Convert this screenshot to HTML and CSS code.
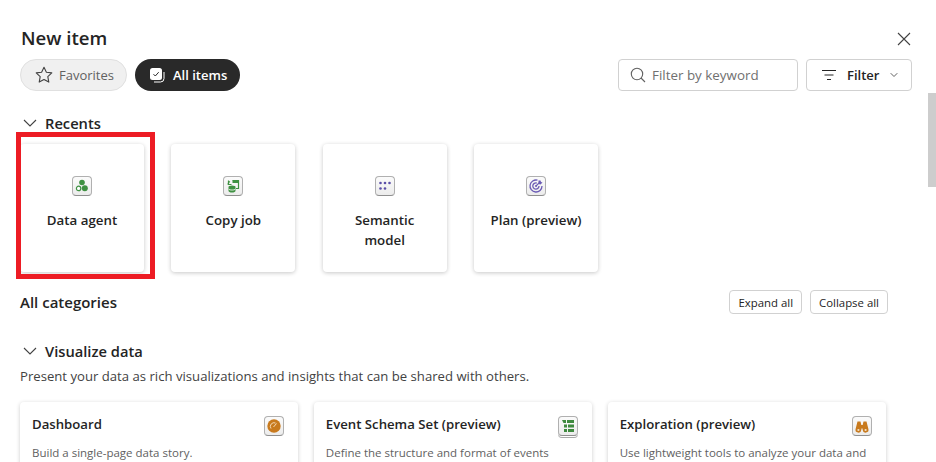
FILE: index.html
```html
<!DOCTYPE html>
<html>
<head>
    <title>New item</title>
    <link rel="stylesheet" href="styles.css">
</head>
<body>
    <div class="dialog">
        <div class="title-row">
            <h1>New item</h1>
            <svg class="close" width="16" height="16" viewBox="0 0 16 16"><path d="M2 2l12 12M14 2L2 14" stroke="#424242" stroke-width="1.1" fill="none"/></svg>
        </div>

        <div class="toolbar">
            <div class="pill pill-light">
                <svg width="20" height="20" viewBox="0 0 20 20"><path d="M10 2.2l2.4 5 5.4.7-4 3.8 1 5.4-4.8-2.6-4.8 2.6 1-5.4-4-3.8 5.4-.7z" fill="none" stroke="#424242" stroke-width="1.1" stroke-linejoin="round"/></svg>
                Favorites
            </div>
            <div class="pill pill-dark">
                <svg width="16" height="16" viewBox="0 0 16 16"><rect x="1" y="1" width="12" height="12" rx="2.5" fill="#fff"/><path d="M4.5 7.2l1.8 1.8 3.4-3.8" fill="none" stroke="#292929" stroke-width="1"/><path d="M15 5v6.5a3.5 3.5 0 0 1-3.5 3.5H5" fill="none" stroke="#fff" stroke-width="1"/></svg>
                All items
            </div>
            <div class="spacer"></div>
            <div class="search">
                <svg width="16" height="16" viewBox="0 0 16 16"><circle cx="7" cy="7" r="5.7" fill="none" stroke="#616161" stroke-width="1.1"/><path d="M11 11l4 4" stroke="#616161" stroke-width="1.1"/></svg>
                Filter by keyword
            </div>
            <div class="filter">
                <svg width="14" height="12" viewBox="0 0 14 12"><path d="M0 1.5h14M2.5 6h9M5 10.500h4" stroke="#242424" stroke-width="1.1"/></svg>
                <b>Filter</b>
                <svg width="8" height="6" viewBox="0 0 8 6"><path d="M.7 1.200L4 4.500l3.300-3.300" fill="none" stroke="#616161"/></svg>
            </div>
        </div>

        <div class="section-head recents-head">
            <svg width="14" height="8" viewBox="0 0 14 8"><path d="M1 1l6 6 6-6" fill="none" stroke="#424242" stroke-width="1.1"/></svg>
            Recents
        </div>

        <div class="recents">
            <div class="recent-card">
                <div class="callout"></div>
                <span class="tile">
                    <svg width="16" height="16" viewBox="0 0 16 16"><circle cx="8" cy="4.500" r="2.800" fill="#3f9142"/><circle cx="10.800" cy="10.200" r="3" fill="#3f9142"/><circle cx="4.600" cy="10.400" r="2.200" fill="#fff" stroke="#3f9142" stroke-width="1.200"/></svg>
                </span>
                <div class="recent-name">Data agent</div>
            </div>
            <div class="recent-card">
                <span class="tile">
                    <svg width="16" height="16" viewBox="0 0 16 16"><path d="M7.500 2.500h6v8H11" fill="none" stroke="#3f9142" stroke-width="1.200"/><path d="M7.500 2.500h6v2.500h-6z" fill="#3f9142"/><path d="M3 6.500a3 3 0 0 1 2-3M3.500 2.500v4h3" fill="none" stroke="#3f9142" stroke-width="1.200"/><ellipse cx="7" cy="9" rx="3.500" ry="1.500" fill="#3f9142"/><path d="M3.500 9.500v3.200c0 1 1.500 1.800 3.500 1.800s3.500-.8 3.500-1.800V9.500z" fill="#3f9142"/><path d="M3.800 11.300c1 1 5.400 1 6.400 0" fill="none" stroke="#fff" stroke-width=".8"/></svg>
                </span>
                <div class="recent-name">Copy job</div>
            </div>
            <div class="recent-card">
                <span class="tile">
                    <svg width="16" height="16" viewBox="0 0 16 16" fill="#5b4fa8"><circle cx="3.500" cy="5" r="1.300"/><circle cx="8" cy="5" r="1.300"/><circle cx="12.500" cy="5" r="1.300"/><circle cx="3.500" cy="10.500" r="1.300"/><circle cx="8" cy="10.500" r="1.300"/></svg>
                </span>
                <div class="recent-name">Semantic<br>model</div>
            </div>
            <div class="recent-card">
                <span class="tile">
                    <svg width="16" height="16" viewBox="0 0 16 16" fill="none" stroke="#6b5bb5" stroke-width="1.300"><path d="M9.500 2.200A6 6 0 1 0 14 8"/><path d="M8.800 5.100A3.100 3.100 0 1 0 11 8"/><circle cx="8" cy="8" r="1" fill="#6b5bb5" stroke="none"/><path d="M8 8l3.500-3.500" stroke-width="1.100"/><path d="M10.500 2.500h2l.5 1.500 1.500.5-2 2-2-.5z" fill="#6b5bb5" stroke="none"/></svg>
                </span>
                <div class="recent-name">Plan (preview)</div>
            </div>
        </div>

        <div class="categories-head">
            <h2>All categories</h2>
            <div class="head-buttons">
                <div class="small-btn">Expand all</div>
                <div class="small-btn">Collapse all</div>
            </div>
        </div>

        <div class="section-head visualize-head">
            <svg width="14" height="8" viewBox="0 0 14 8"><path d="M1 1l6 6 6-6" fill="none" stroke="#424242" stroke-width="1.1"/></svg>
            Visualize data
        </div>
        <p class="section-desc">Present your data as rich visualizations and insights that can be shared with others.</p>

        <div class="items">
            <div class="item-card">
                <div class="item-top">
                    <div class="item-name">Dashboard</div>
                    <span class="tile">
                        <svg width="16" height="16" viewBox="0 0 16 16"><circle cx="8" cy="8" r="6.700" fill="#c87a1e"/><path d="M5 10.500A3.700 3.700 0 0 1 9.500 5" fill="none" stroke="#f3d9b5" stroke-width="1"/><path d="M7.500 9l3-3.500" stroke="#f3d9b5" stroke-width="1"/></svg>
                    </span>
                </div>
                <div class="item-text">Build a single-page data story.</div>
            </div>
            <div class="item-card">
                <div class="item-top">
                    <div class="item-name">Event Schema Set (preview)</div>
                    <span class="tile tile-stacked">
                        <svg width="16" height="16" viewBox="0 0 16 16" fill="#3f8a3f"><path d="M2 2h4v3H3.500z"/><rect x="7" y="2" width="7" height="3"/><rect x="4" y="6.500" width="3" height="3"/><rect x="8" y="6.500" width="6" height="3"/><rect x="4" y="11" width="3" height="3"/><rect x="8" y="11" width="6" height="3"/></svg>
                    </span>
                </div>
                <div class="item-text">Define the structure and format of events</div>
            </div>
            <div class="item-card">
                <div class="item-top">
                    <div class="item-name">Exploration (preview)</div>
                    <span class="tile">
                        <svg width="16" height="16" viewBox="0 0 16 16" fill="#c87a1e"><path d="M3.500 3.500h3L7.300 7h1.400l.8-3.500h3l1.900 7.500a2.900 2.900 0 1 1-5.700 1l-.2-1.500H7.500L7.300 12a2.900 2.900 0 1 1-5.700-1z"/><circle cx="4.400" cy="12" r="1.100" fill="#f3e2cb"/><circle cx="11.600" cy="12" r="1.100" fill="#f3e2cb"/></svg>
                    </span>
                </div>
                <div class="item-text">Use lightweight tools to analyze your data and</div>
            </div>
        </div>
    </div>

    <div class="scroll-thumb"></div>
</body>
</html>
```

FILE: styles.css
```css
html, body {
    margin: 0;
    padding: 0;
    height: 462px;
    overflow: hidden;
    background: #fff;
}
body {
    position: relative;
    font-family: "Open Sans", "Noto Sans", sans-serif;
    color: #242424;
}
.dialog {
    box-sizing: border-box;
    height: 462px;
    overflow: hidden;
    padding: 26px 24px 0 20px;
}

.title-row { display: flex; justify-content: space-between; align-items: center; height: 26px; }
h1 { margin: 0 0 3px 1px; font-size: 18.600px; font-weight: 600; }

.toolbar { display: flex; align-items: center; gap: 8px; margin-top: 7px; height: 32px; }
.spacer { flex: 1; }
.pill {
    box-sizing: border-box;
    height: 32px;
    border-radius: 16px;
    display: flex;
    align-items: center;
    font-size: 13px;
}
.pill-light {
    width: 107px;
    padding-left: 13px;
    gap: 5px;
    background: #f0f0f0;
    border: 1px solid #e0e0e0;
    color: #616161;
}
.pill-dark {
    width: 105px;
    padding-left: 14px;
    gap: 8px;
    background: #292929;
    color: #fff;
    font-weight: 600;
}
.search {
    box-sizing: border-box;
    width: 180px;
    height: 32px;
    padding-left: 11px;
    display: flex;
    align-items: center;
    gap: 6px;
    border: 1px solid #d1d1d1;
    border-radius: 4px;
    font-size: 13.400px;
    color: #707070;
}
.filter {
    box-sizing: border-box;
    width: 106px;
    height: 32px;
    padding-left: 15px;
    display: flex;
    align-items: center;
    gap: 11px;
    border: 1px solid #d1d1d1;
    border-radius: 4px;
    font-size: 13px;
}
.filter b { font-weight: 600; }

.section-head { display: flex; align-items: center; gap: 8px; height: 20px; padding-left: 3px; font-size: 14.700px; font-weight: 600; }
.recents-head { margin-top: 22px; }

.recents { display: flex; gap: 27.330px; margin-top: 11px; }
.recent-card {
    position: relative;
    box-sizing: border-box;
    width: 124px;
    height: 128px;
    padding-top: 32px;
    text-align: center;
    background: #fff;
    border-radius: 4px;
    box-shadow: 0 1px 4px rgba(0, 0, 0, 0.22);
}
.recent-name { margin-top: 12px; font-size: 13.300px; font-weight: 600; line-height: 20px; }
.callout {
    position: absolute;
    left: -4px;
    top: -12px;
    box-sizing: border-box;
    width: 139px;
    height: 147px;
    border: 5px solid #ed1c24;
}

.tile {
    box-sizing: border-box;
    display: inline-flex;
    align-items: center;
    justify-content: center;
    width: 20px;
    height: 20px;
    background: linear-gradient(#fbfbfb, #ececec);
    border: 1px solid #b0b0b0;
    border-bottom-color: #8f8f8f;
    border-radius: 4px;
    vertical-align: top;
}
.tile-stacked { box-shadow: 0 1px 0 #fff, 0 2px 0 #a8a8a8; }

.categories-head { display: flex; justify-content: space-between; align-items: center; height: 24px; margin-top: 18px; padding-right: 24px; }
h2 { margin: 0; font-size: 15px; font-weight: 600; }
.head-buttons { display: flex; gap: 8px; }
.small-btn {
    box-sizing: border-box;
    height: 24px;
    padding: 0 8px;
    display: flex;
    align-items: center;
    border: 1px solid #d1d1d1;
    border-radius: 4px;
    font-size: 11.400px;
}

.visualize-head { margin-top: 27px; }
.section-desc { margin: 6px 0 0; font-size: 13.150px; line-height: 18px; color: #424242; }

.items { display: flex; gap: 15.500px; width: 866px; margin-top: 17px; }
.item-card {
    box-sizing: border-box;
    flex: 1;
    height: 110px;
    padding: 14px 14px 0 12px;
    background: #fff;
    border-radius: 4px;
    box-shadow: 0 1px 4px rgba(0, 0, 0, 0.2);
}
.item-top { display: flex; justify-content: space-between; align-items: flex-start; height: 29px; }
.item-name { font-size: 13.200px; font-weight: 600; line-height: 16px; }
.item-text { font-size: 11.500px; line-height: 16px; color: #616161; white-space: nowrap; }

.scroll-thumb {
    position: absolute;
    right: 0;
    top: 93px;
    width: 8px;
    height: 94px;
    background: #cdcdcd;
}
```
